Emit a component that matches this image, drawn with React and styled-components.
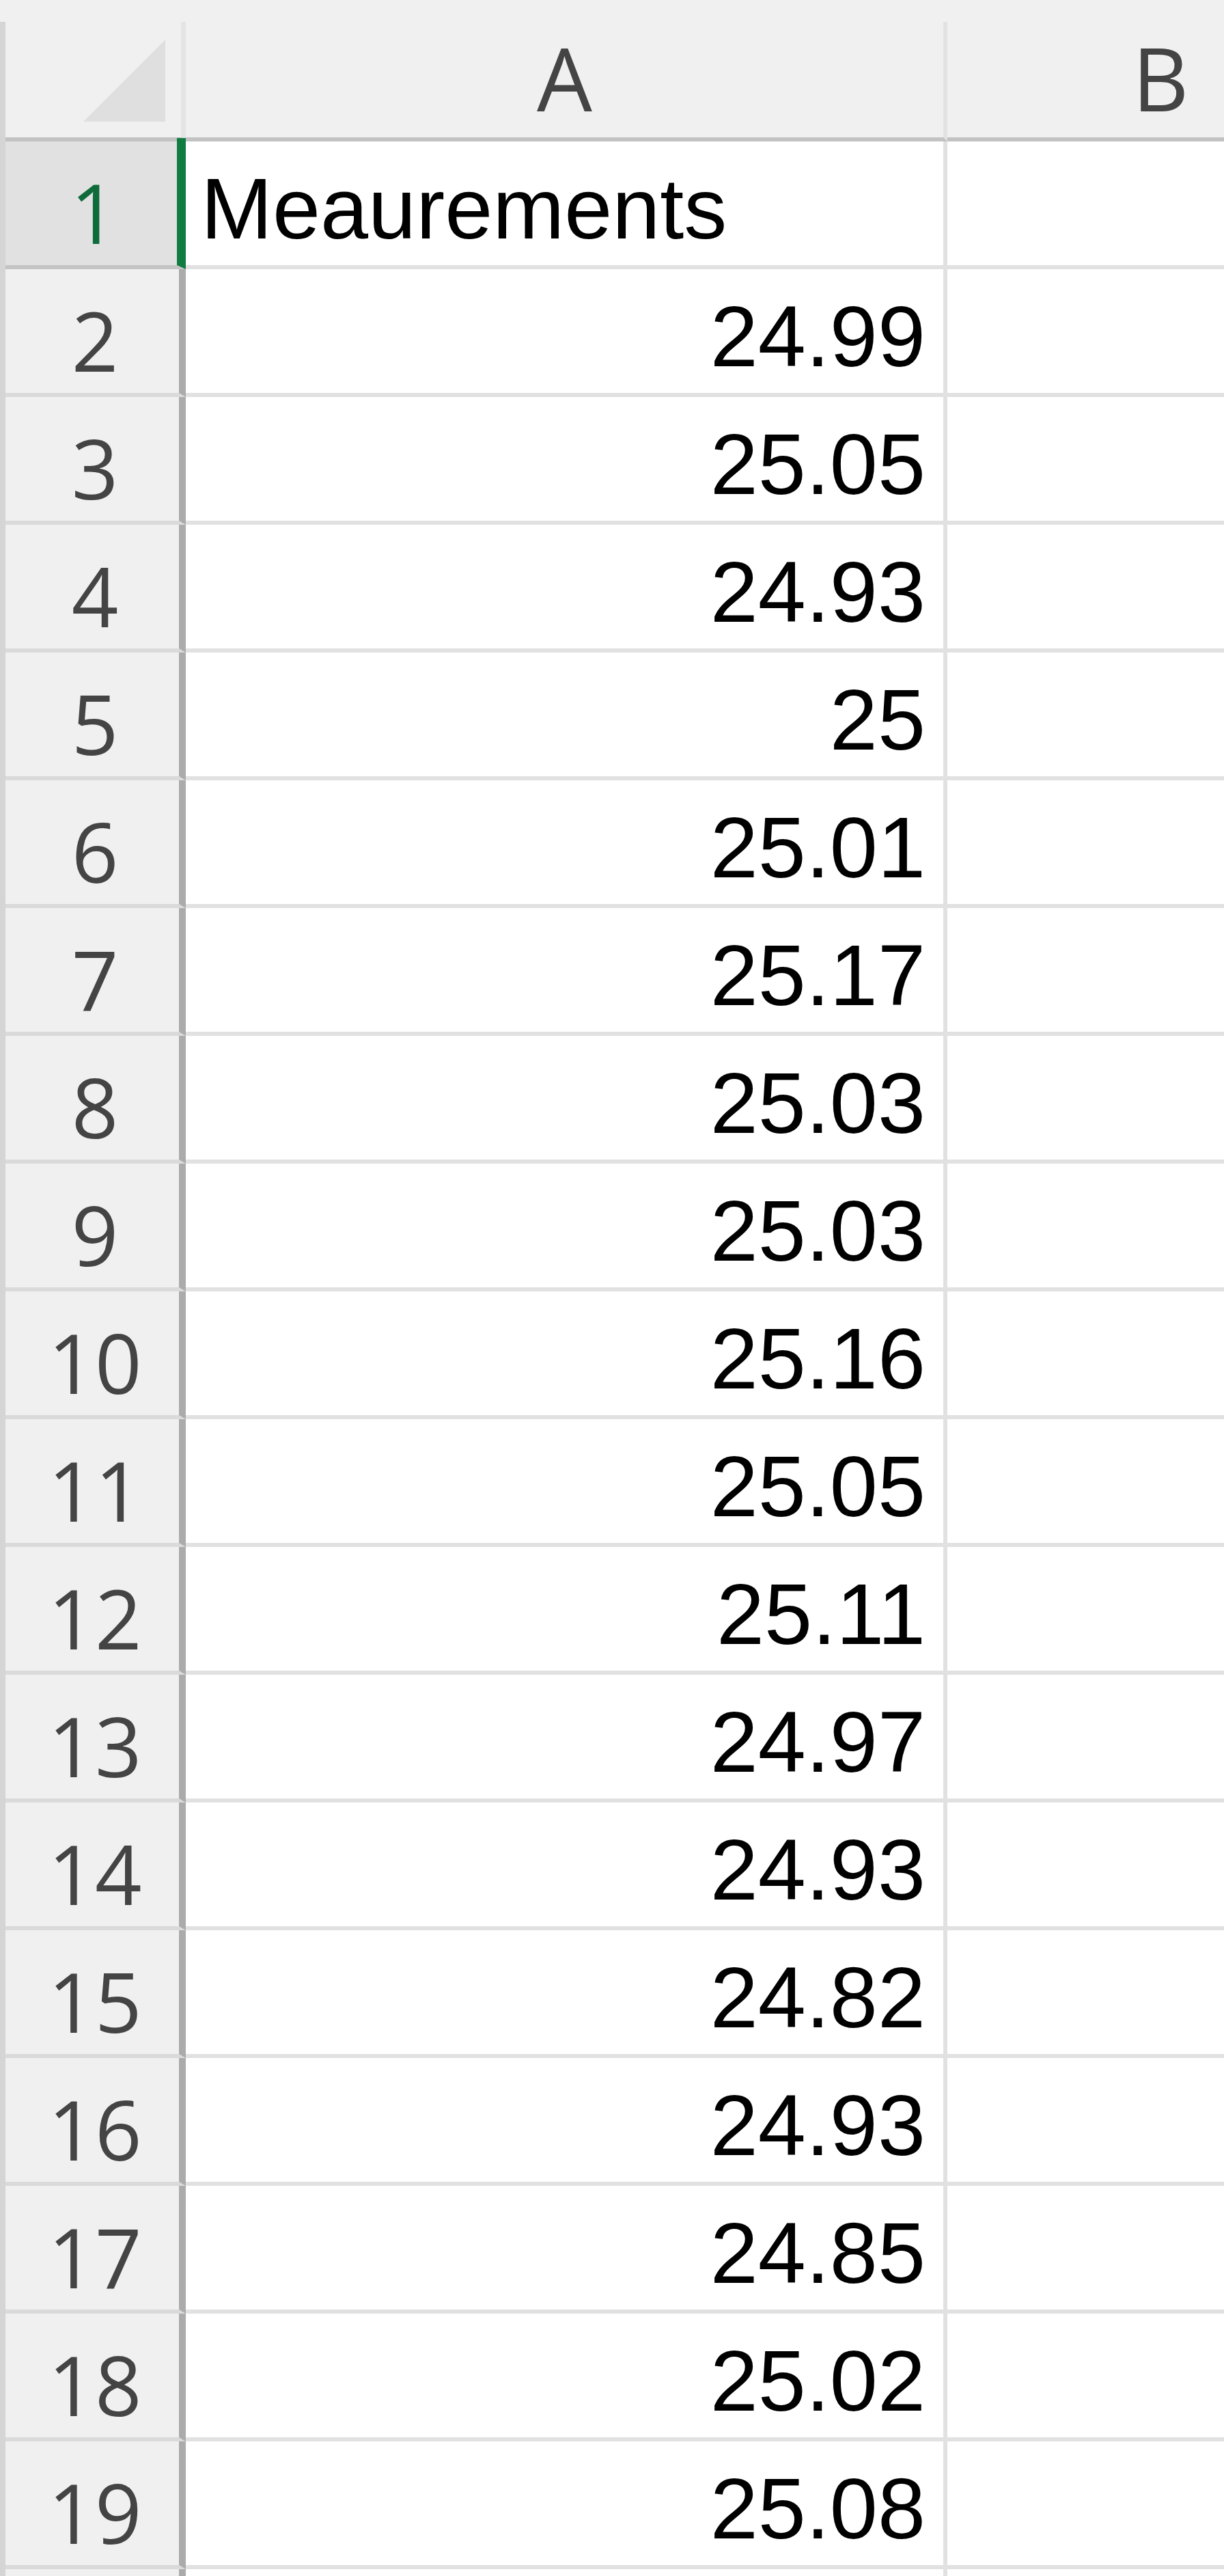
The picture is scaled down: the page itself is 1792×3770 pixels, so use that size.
import { styled, createGlobalStyle } from "styled-components";

const GlobalStyle = createGlobalStyle`
  html, body {
    margin: 0;
    padding: 0;
    background: #ffffff;
  }
`;

const Sheet = styled.div`
  width: 1792px;
  height: 3770px;
  overflow: hidden;
  background: #ffffff;
  display: flex;
  flex-direction: column;
`;

const TopBand = styled.div`
  height: 32px;
  flex: none;
  background: #f0f0f0;
`;

const Grid = styled.div`
  display: grid;
  grid-template-columns: 264px 1115px 630px;
  grid-template-rows: 175px;
  grid-auto-rows: 187px;
  border-left: 8px solid #d5d5d5;
  width: max-content;
`;

const Corner = styled.div`
  box-sizing: border-box;
  background: #f0f0f0;
  border-right: 7px solid #e4e4e4;
  border-bottom: 6px solid #c2c2c2;
  display: flex;
  justify-content: flex-end;
  align-items: flex-end;
  padding: 0 23px 23px 0;
`;

const Triangle = styled.div`
  width: 120px;
  height: 120px;
  background: #dfdfdf;
  clip-path: polygon(100% 0, 100% 100%, 0 100%);
`;

const ColHead = styled.div`
  box-sizing: border-box;
  background: #f0f0f0;
  border-right: 6px solid #e2e2e2;
  border-bottom: 6px solid #c2c2c2;
  display: flex;
  justify-content: center;
  align-items: flex-end;
  padding-bottom: 23px;
  font-family: "Open Sans", "Noto Sans", sans-serif;
  font-size: 128px;
  line-height: 1;
  color: #444444;
`;

const RowHead = styled.div`
  position: relative;
  box-sizing: border-box;
  background: ${(p) => (p.$active ? "#e1e1e1" : "#f0f0f0")};
  border-right: ${(p) =>
    p.$active ? "13px solid #107c41" : "10px solid #ababab"};
  border-bottom: 6px solid ${(p) => (p.$active ? "#c4c4c4" : "#dadada")};
  display: flex;
  justify-content: center;
  align-items: flex-end;
  padding: 0 0 17px 8px;
  font-family: "Open Sans", "Noto Sans", sans-serif;
  font-size: 120px;
  line-height: 1;
  color: ${(p) => (p.$active ? "#0f6b3a" : "#444444")};

  ${(p) =>
    p.$active &&
    `
    &::after {
      content: "";
      position: absolute;
      right: -13px;
      top: -5px;
      width: 13px;
      height: 5px;
      background: #107c41;
    }
  `}
`;

const Cell = styled.div`
  box-sizing: border-box;
  background: #ffffff;
  border-right: 6px solid #e1e1e1;
  border-bottom: 6px solid #e1e1e1;
  display: flex;
  align-items: flex-end;
  justify-content: ${(p) => (p.$num ? "flex-end" : "flex-start")};
  padding: 0 26px 19px 22px;
  font-family: "Liberation Sans", Arial, sans-serif;
  font-size: 126px;
  line-height: 1;
  color: #000000;
  white-space: nowrap;
  overflow: hidden;
`;

const values = [
  "Meaurements",
  "24.99",
  "25.05",
  "24.93",
  "25",
  "25.01",
  "25.17",
  "25.03",
  "25.03",
  "25.16",
  "25.05",
  "25.11",
  "24.97",
  "24.93",
  "24.82",
  "24.93",
  "24.85",
  "25.02",
  "25.08",
];

function App() {
  return (
    <>
      <GlobalStyle />
      <Sheet>
        <TopBand />
        <Grid>
          <Corner>
            <Triangle />
          </Corner>
          <ColHead>A</ColHead>
          <ColHead>B</ColHead>
          {values.map((v, i) => (
            <Row key={i} label={i + 1} value={v} />
          ))}
          <Row label="" value="" />
        </Grid>
      </Sheet>
    </>
  );
}

function Row({ label, value }) {
  const isNum = value !== "" && !isNaN(Number(value));
  return (
    <>
      <RowHead $active={label === 1}>{label}</RowHead>
      <Cell $num={isNum}>{value}</Cell>
      <Cell />
    </>
  );
}

export default App;
